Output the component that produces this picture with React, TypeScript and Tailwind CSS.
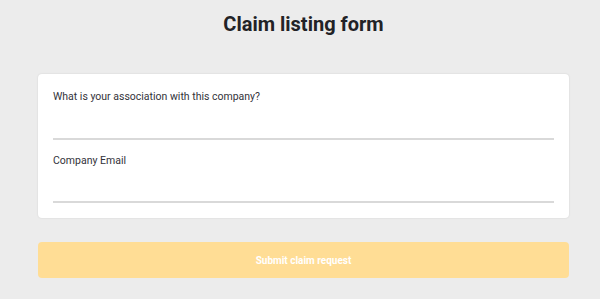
export default function App() {
  return (
    <div className="min-h-[299px] w-full bg-[#ececec] pl-[38px] pr-[31px]" style={{ fontFamily: 'Roboto, "Noto Sans", Arial, sans-serif' }}>
      <h1 className="pt-[10px] text-center text-[20px] font-bold leading-[28px] text-[#222226]">Claim listing form</h1>
      <div className="mt-[36px] rounded-[4px] bg-white px-[15px] pb-[15px] pt-[13px] shadow-[0_0_2px_rgba(0,0,0,0.12)]">
        <div className="flex flex-col">
          <label className="text-[10.5px] leading-[20px] text-[#33333a]">What is your association with this company?</label>
          <input className="h-[33px] border-b-2 border-[#d9d9d9] bg-transparent outline-none" />
        </div>
        <div className="mt-[11px] flex flex-col">
          <label className="text-[10.5px] leading-[20px] text-[#33333a]">Company Email</label>
          <input className="h-[32px] border-b-2 border-[#d9d9d9] bg-transparent outline-none" />
        </div>
      </div>
      <button className="mt-[24px] flex h-[36px] w-full items-center justify-center rounded-[4px] bg-[#ffdd95] text-[10px] font-bold text-white">
        Submit claim request
      </button>
    </div>
  );
}
